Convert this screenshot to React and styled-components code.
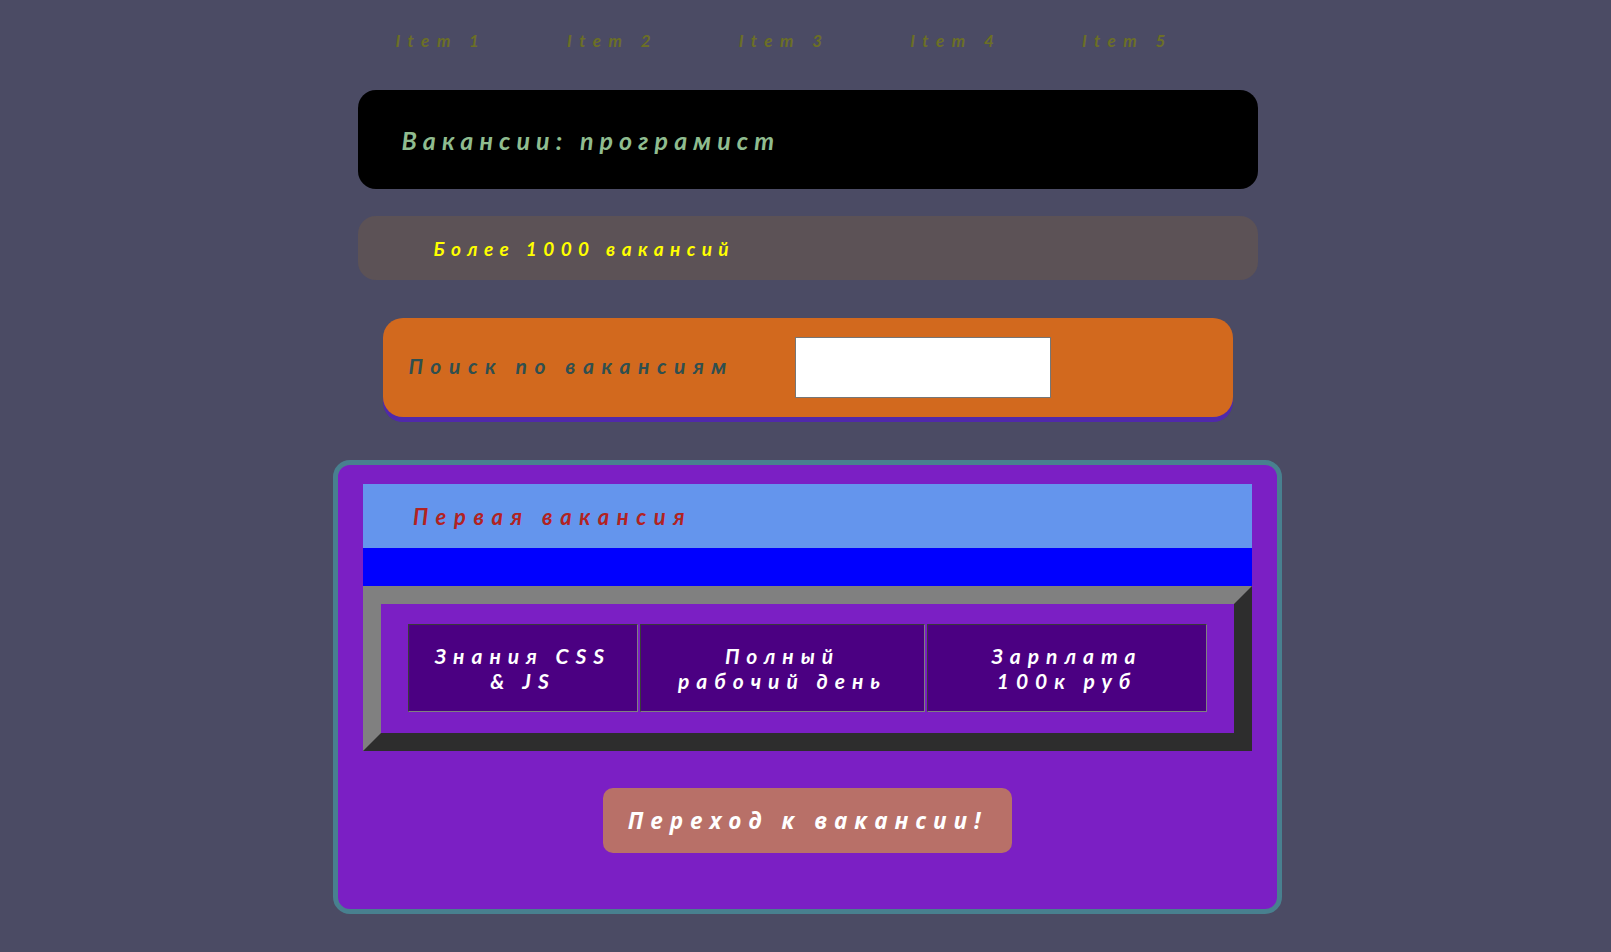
import React from 'react';
import styled, { createGlobalStyle } from 'styled-components';

const GlobalStyle = createGlobalStyle`
  body {
    margin: 0;
    padding-left: 4px;
    background: #4b4b64;
    font-family: Lato, "Open Sans", sans-serif;
  }
`;

const navItems = ['Item 1', 'Item 2', 'Item 3', 'Item 4', 'Item 5'];
const perks = [
  ['Знания CSS', '& JS'],
  ['Полный', 'рабочий день'],
  ['Зарплата', '100к руб'],
];
const perkWidths = [230, 285, 280];

const App = () => (
  <>
    <GlobalStyle />
    <Page>
      <Nav>
        {navItems.map(item => <NavItem key={item}>{item}</NavItem>)}
      </Nav>
      <Header>
        <HeaderTitle>Вакансии: програмист</HeaderTitle>
      </Header>
      <SubHeader>
        <SubTitle>Более 1000 вакансий</SubTitle>
      </SubHeader>
      <Search>
        <SearchLabel>Поиск по вакансиям</SearchLabel>
        <SearchInput type="text" />
      </Search>
      <Card>
        <CardTitle>Первая вакансия</CardTitle>
        <Stripe />
        <Bevel>
          <PerkTable>
            <tbody>
              <tr>
                {perks.map((lines, i) => (
                  <PerkCell key={i} width={perkWidths[i]}>
                    {lines[0]}<br />{lines[1]}
                  </PerkCell>
                ))}
              </tr>
            </tbody>
          </PerkTable>
        </Bevel>
        <ButtonRow>
          <GoButton>Переход к вакансии!</GoButton>
        </ButtonRow>
      </Card>
    </Page>
  </>
);

const Page = styled.div`
  width: 900px;
  margin: 0 auto;
  padding-bottom: 40px;
  font-style: italic;
  font-weight: 700;
`;

const Nav = styled.ul`
  display: flex;
  margin: 0;
  padding: 30px 0 0 38px;
  height: 90px;
  box-sizing: border-box;
  list-style: none;
`;

const NavItem = styled.li`
  width: 171.6px;
  font-size: 17px;
  line-height: 22px;
  letter-spacing: 7.5px;
  color: #6c6f26;
`;

const Header = styled.div`
  height: 99px;
  display: flex;
  align-items: center;
  padding-left: 44px;
  background: #000;
  border-radius: 18px;
`;

const HeaderTitle = styled.h1`
  margin: 0;
  font-size: 25px;
  letter-spacing: 6.1px;
  color: #8fbc8f;
`;

const SubHeader = styled.div`
  height: 64px;
  margin-top: 27px;
  display: flex;
  align-items: center;
  padding-left: 76px;
  background: #5c5256;
  border-radius: 18px;
`;

const SubTitle = styled.h2`
  margin: 0;
  font-size: 19px;
  letter-spacing: 6.4px;
  color: #ffff00;
`;

const Search = styled.div`
  width: 850px;
  height: 99px;
  margin: 38px auto 0;
  display: flex;
  align-items: center;
  padding-left: 26px;
  box-sizing: border-box;
  background: #d2691e;
  border-radius: 20px;
  box-shadow: 0 5px 0 #5029aa;
`;

const SearchLabel = styled.span`
  width: 386px;
  padding-bottom: 5px;
  font-size: 21px;
  letter-spacing: 7.6px;
  color: #2f4f4f;
`;

const SearchInput = styled.input`
  width: 256px;
  height: 61px;
  box-sizing: border-box;
  border: 1px solid #767676;
  background: #fff;
  outline: none;
`;

const Card = styled.div`
  width: 949px;
  margin: 43px 0 0 -24.5px;
  box-sizing: border-box;
  padding: 19px 25px 56px;
  background: #7b1fc4;
  border: 5px solid #48808f;
  border-radius: 17px;
`;

const CardTitle = styled.h3`
  height: 64px;
  margin: 0;
  display: flex;
  align-items: center;
  padding-left: 50px;
  background: #6495ed;
  font-size: 22px;
  letter-spacing: 7.6px;
  color: #b22222;
`;

const Stripe = styled.div`
  height: 38px;
  background: #0000ff;
`;

const Bevel = styled.div`
  padding: 18px 25px 19px;
  border: 18px solid;
  border-color: #808080 #2d2d2d #2d2d2d #808080;
`;

const PerkTable = styled.table`
  border-spacing: 2px;
`;

const PerkCell = styled.td`
  width: ${props => props.width}px;
  height: 88px;
  box-sizing: border-box;
  padding: 0;
  text-align: center;
  vertical-align: middle;
  background: #4b0082;
  border: 1px solid;
  border-color: #3a3a3a #808080 #808080 #3a3a3a;
  color: #fff;
  font-size: 21px;
  line-height: 25px;
  letter-spacing: 7px;
`;

const ButtonRow = styled.div`
  display: flex;
  justify-content: center;
  margin-top: 37px;
`;

const GoButton = styled.button`
  width: 409px;
  height: 65px;
  border: none;
  border-radius: 10px;
  background: #b87068;
  color: #fff;
  font-family: "Open Sans", sans-serif;
  font-style: italic;
  font-weight: 700;
  font-size: 22.5px;
  letter-spacing: 6.9px;
  cursor: pointer;
`;

export default App;
